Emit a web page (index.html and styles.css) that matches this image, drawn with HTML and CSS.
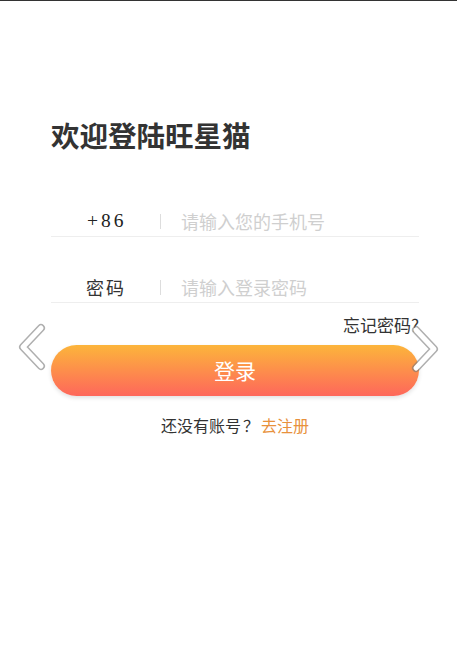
FILE: index.html
```html
<!DOCTYPE html>
<html lang="zh">
<head>
<meta charset="utf-8">
<title>欢迎登陆旺星猫</title>
<link rel="stylesheet" href="styles.css">
</head>
<body>
<div class="page">
  <div class="login">
    <h1 class="title">欢迎登陆旺星猫</h1>
    <div class="field field-phone">
      <span class="label label-code">+86</span>
      <span class="sep"></span>
      <span class="placeholder">请输入您的手机号</span>
    </div>
    <div class="field field-pwd">
      <span class="label">密码</span>
      <span class="sep"></span>
      <span class="placeholder">请输入登录密码</span>
    </div>
    <div class="forgot">忘记密码?</div>
    <button class="btn">登录</button>
    <div class="register">还没有账号<span class="qmark">？</span><span class="reg-link">去注册</span></div>
  </div>
  <svg class="arrow arrow-left" width="34" height="48" viewBox="0 0 34 48">
    <polyline points="26,5 8,24 26,43" fill="none" stroke="#7a7a7a" stroke-width="8" stroke-linecap="round" stroke-linejoin="round" opacity="0.6"/>
    <polyline points="26,5 8,24 26,43" fill="none" stroke="#fff" stroke-width="5" stroke-linecap="round" stroke-linejoin="round"/>
  </svg>
  <svg class="arrow arrow-right" width="34" height="48" viewBox="0 0 34 48">
    <polyline points="8,5 26,24 8,43" fill="none" stroke="#7a7a7a" stroke-width="8" stroke-linecap="round" stroke-linejoin="round" opacity="0.6"/>
    <polyline points="8,5 26,24 8,43" fill="none" stroke="#fff" stroke-width="5" stroke-linecap="round" stroke-linejoin="round"/>
  </svg>
</div>
</body>
</html>
```

FILE: styles.css
```css
html, body {
  margin: 0;
  padding: 0;
  background: #fff;
}
body {
  font-family: "Noto Sans CJK SC", "Noto Sans", sans-serif;
  color: #333;
}
.page {
  position: relative;
  height: 670px;
  border-top: 1px solid #333;
}
.login {
  width: 368px;
  margin-left: 51px;
  padding-top: 114px;
}
.title {
  margin: 0;
  font-size: 28.5px;
  line-height: 40px;
  font-weight: 700;
  color: #333;
}
.field {
  display: flex;
  align-items: center;
  height: 24px;
  padding-bottom: 3px;
  border-bottom: 1px solid #eeeeee;
}
.field-phone {
  margin-top: 54px;
}
.field-pwd {
  margin-top: 38px;
}
.label {
  flex: none;
  width: 109px;
  padding-left: 35px;
  box-sizing: border-box;
  font-size: 18px;
  line-height: 24px;
  letter-spacing: 2px;
  color: #333;
  white-space: nowrap;
}
.label-code {
  font-family: "Liberation Serif", serif;
  font-size: 19.5px;
  letter-spacing: 3px;
  padding-left: 36px;
  color: #222;
}
.sep {
  flex: none;
  width: 1px;
  height: 15px;
  background: #dddddd;
}
.placeholder {
  margin-left: 20px;
  font-size: 18px;
  line-height: 24px;
  color: #cfcfcf;
  white-space: nowrap;
}
.forgot {
  margin-top: 11px;
  text-align: right;
  font-size: 17px;
  line-height: 22px;
  color: #333;
}
.btn {
  display: block;
  width: 368px;
  height: 51px;
  margin-top: 9px;
  border: none;
  border-radius: 26px;
  background: linear-gradient(to bottom, #fcb53b, #fe675b);
  box-shadow: 0 2px 4px rgba(0, 0, 0, 0.12);
  color: #fff;
  font-family: "Noto Sans CJK SC", sans-serif;
  font-size: 21px;
  line-height: 51px;
  padding: 0;
}
.register {
  margin-top: 18px;
  text-align: center;
  font-size: 16px;
  line-height: 22px;
  color: #333;
}
.qmark {
  margin: 0 2px;
}
.reg-link {
  color: #e8913c;
}
.arrow {
  position: absolute;
}
.arrow-left {
  left: 15px;
  top: 322px;
}
.arrow-right {
  left: 408px;
  top: 324px;
}
```
